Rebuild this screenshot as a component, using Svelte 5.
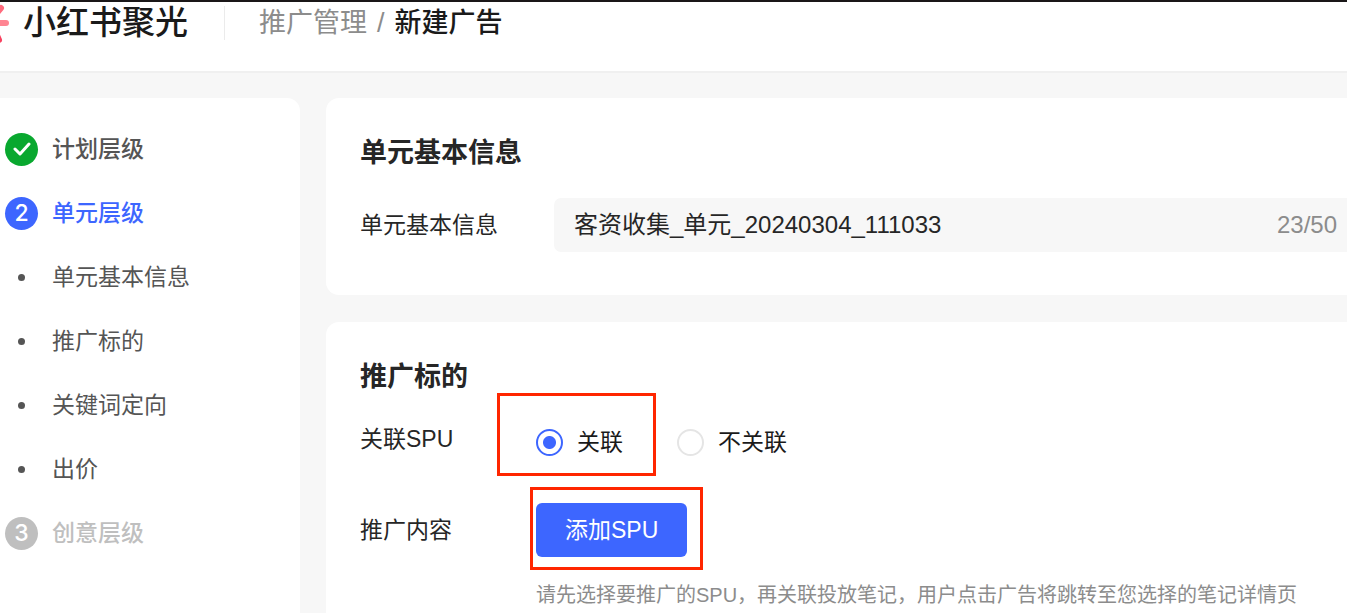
<script>
  const steps = [
    { label: '计划层级', state: 'done' },
    { label: '单元层级', state: 'active', number: 2 },
    { label: '单元基本信息', state: 'sub' },
    { label: '推广标的', state: 'sub' },
    { label: '关键词定向', state: 'sub' },
    { label: '出价', state: 'sub' },
    { label: '创意层级', state: 'todo', number: 3 },
  ];

  const maxLength = 50;
  const counted = 23;

  let unitName = $state('客资收集_单元_20240304_111033');
  let linked = $state('yes');
</script>

<div class="page">
  <header class="topbar">
    <svg class="logo" width="10" height="44" viewBox="0 0 10 44" aria-hidden="true">
      <path d="M-4 13 L1 7" stroke="#ff6b7d" stroke-width="6" stroke-linecap="round" />
      <path d="M-4 22 H6" stroke="#ff8592" stroke-width="6" stroke-linecap="round" />
      <path d="M-4 32 L-1 39" stroke="#f8415f" stroke-width="6" stroke-linecap="round" />
    </svg>
    <span class="brand">小红书聚光</span>
    <nav class="crumbs">
      <a href="#manage">推广管理</a>
      <span class="slash">/</span>
      <span class="current">新建广告</span>
    </nav>
  </header>

  <div class="body">
    <aside class="sidebar">
      <ul>
        {#each steps as step}
          <li class={step.state}>
            <span class="marker">
              {#if step.state === 'done'}
                <svg width="18" height="14" viewBox="0 0 18 14" aria-hidden="true">
                  <path d="M2 7 L7 12 L16 2" fill="none" stroke="#fff" stroke-width="3" stroke-linecap="round" stroke-linejoin="round" />
                </svg>
              {:else if step.number}
                {step.number}
              {/if}
            </span>
            <span>{step.label}</span>
          </li>
        {/each}
      </ul>
    </aside>

    <main>
      <section class="card">
        <h2>单元基本信息</h2>
        <div class="row name-row">
          <label class="field-label" for="unit-name">单元基本信息</label>
          <div class="input-box">
            <input id="unit-name" type="text" bind:value={unitName} />
            <span class="count">{counted}/{maxLength}</span>
          </div>
        </div>
      </section>

      <section class="card target">
        <h2>推广标的</h2>
        <div class="row link-row">
          <span class="field-label" id="link-label">关联SPU</span>
          <div class="radios" role="radiogroup" aria-labelledby="link-label">
            <label class="radio marked">
              <input type="radio" name="linked" value="yes" bind:group={linked} />
              关联
            </label>
            <label class="radio">
              <input type="radio" name="linked" value="no" bind:group={linked} />
              不关联
            </label>
          </div>
        </div>
        <div class="row content-row">
          <span class="field-label">推广内容</span>
          <div class="marked button-mark">
            <button type="button">添加SPU</button>
          </div>
        </div>
        <p class="hint">请先选择要推广的SPU，再关联投放笔记，用户点击广告将跳转至您选择的笔记详情页</p>
      </section>
    </main>
  </div>
</div>

<style>
  :global(body) {
    margin: 0;
    background: #f7f7f7;
  }
  .page {
    display: flex;
    flex-direction: column;
    min-height: 100vh;
    box-sizing: border-box;
    overflow: hidden;
    border-top: 2px solid #1a1718;
    font-family: 'Liberation Sans', 'Noto Sans CJK SC', sans-serif;
    font-size: 23px;
    line-height: 32px;
    color: #262626;
  }

  .topbar {
    display: flex;
    align-items: center;
    height: 42px;
    padding-bottom: 27px;
    background: #fff;
    border-bottom: 2px solid #f0f0f0;
  }
  .logo {
    flex: none;
    margin-right: 13px;
  }
  .brand {
    font-size: 33px;
    font-weight: 500;
    color: #1a1a1a;
    padding-right: 36px;
    white-space: nowrap;
  }
  .crumbs {
    display: flex;
    align-items: center;
    height: 34px;
    padding-left: 34px;
    border-left: 1px solid #ebebeb;
    font-size: 27px;
    white-space: nowrap;
  }
  .crumbs a {
    color: #8c8c8c;
    text-decoration: none;
  }
  .slash {
    margin: 0 10px;
    color: #8c8c8c;
  }
  .current {
    font-weight: 500;
    color: #1a1a1a;
  }

  .body {
    display: flex;
    flex: 1;
    gap: 26px;
    padding-top: 25px;
  }
  .sidebar {
    flex: none;
    width: 300px;
    background: #fff;
    border-top-right-radius: 13px;
  }
  ul {
    list-style: none;
    margin: 0;
    padding: 19px 0 0 5px;
  }
  li {
    display: flex;
    align-items: center;
    gap: 14px;
    height: 64px;
    color: #555;
  }
  .marker {
    display: flex;
    align-items: center;
    justify-content: center;
    width: 33px;
    height: 33px;
    border-radius: 50%;
    color: #fff;
    font-family: Inter, sans-serif;
    font-weight: 500;
  }
  .done,
  .active,
  .todo {
    font-weight: 500;
  }
  .done .marker {
    background: #09a82f;
  }
  .active {
    color: #3d66ff;
  }
  .active .marker {
    background: #3d66ff;
  }
  .todo {
    color: #bfbfbf;
  }
  .todo .marker {
    background: #bfbfbf;
  }
  .sub .marker::before {
    content: '';
    width: 7px;
    height: 7px;
    border-radius: 50%;
    background: #555;
  }

  main {
    display: flex;
    flex: 1;
    flex-direction: column;
    gap: 27px;
    min-width: 0;
  }
  .card {
    background: #fff;
    padding: 34px 0 43px 34px;
    border-radius: 13px 0 0 13px;
  }
  .target {
    flex: 1;
    padding-bottom: 0;
    border-bottom-left-radius: 0;
  }
  h2 {
    margin: 0;
    font-size: 27px;
    font-weight: 700;
    line-height: 42px;
  }
  .row {
    display: flex;
    align-items: center;
  }
  .field-label {
    flex: none;
    width: 176px;
  }
  .name-row {
    margin-top: 24px;
  }
  .name-row .field-label {
    width: 194px;
  }
  .input-box {
    display: flex;
    flex: 1;
    align-items: center;
    min-width: 0;
    height: 54px;
    padding: 0 10px 0 20px;
    background: #f7f7f7;
    border-radius: 7px 0 0 7px;
    font-size: 24px;
  }
  .input-box input {
    flex: 1;
    min-width: 0;
    padding: 0;
    border: 0;
    outline: 0;
    background: none;
    font: inherit;
    color: #262626;
  }
  .count {
    color: #8c8c8c;
  }

  .link-row {
    align-items: flex-start;
    margin-top: 25px;
  }
  .radios {
    display: flex;
    gap: 54px;
    padding-top: 3px;
  }
  .radio {
    display: flex;
    align-items: center;
    gap: 14px;
    color: #1a1a1a;
  }
  .radio input {
    appearance: none;
    flex: none;
    width: 27px;
    height: 27px;
    margin: 0;
    border: 2px solid #e5e5e5;
    border-radius: 50%;
  }
  .radio input:checked {
    border-color: #3d66ff;
    background: radial-gradient(circle, #3d66ff 6px, #fff 7px);
  }

  /* red frames that call out the controls to use */
  .marked {
    position: relative;
  }
  .marked::after {
    content: '';
    position: absolute;
    inset: -33px -33px -18px -39px;
    border: 3px solid #ff2600;
    pointer-events: none;
  }
  .button-mark::after {
    inset: -16px -16px -13px -6px;
  }

  .content-row {
    margin-top: 45px;
  }
  button {
    display: block;
    height: 54px;
    padding: 0 29px;
    border: 0;
    border-radius: 6px;
    background: #3d66ff;
    color: #fff;
    font: inherit;
  }
  .hint {
    margin: 23px 0 0 176px;
    font-size: 20px;
    line-height: 30px;
    color: #8c8c8c;
    white-space: nowrap;
  }
</style>
